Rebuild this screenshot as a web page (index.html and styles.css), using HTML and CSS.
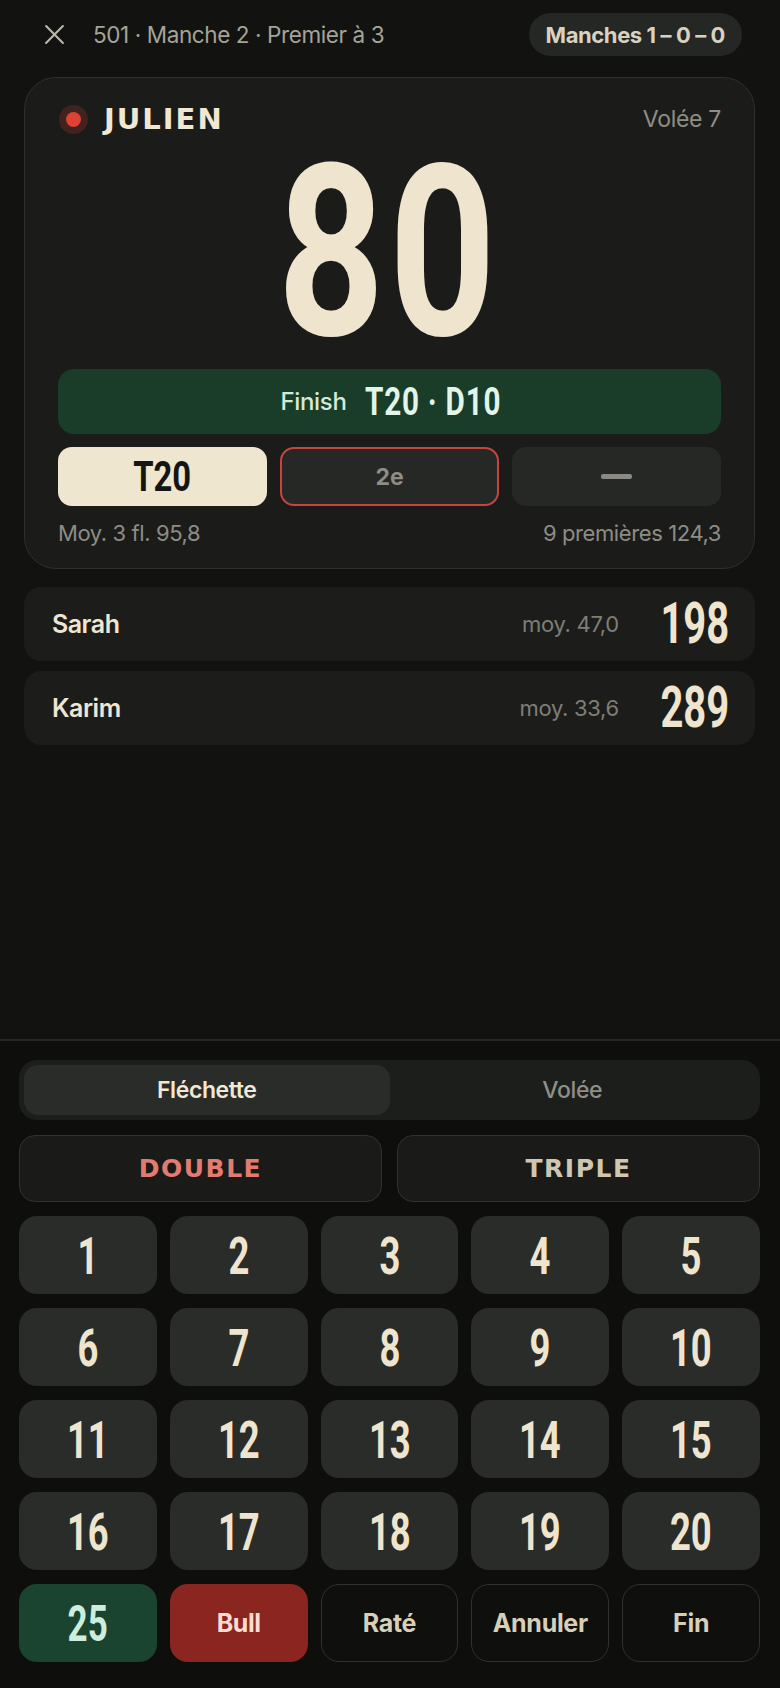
FILE: index.html
```html
<!DOCTYPE html>
<html lang="fr">
<head>
    <meta charset="UTF-8">
    <meta name="viewport" content="width=device-width, initial-scale=1.0">
    <title>501 - Manche 2</title>
    <link rel="stylesheet" href="styles.css">
</head>
<body>
    <div class="screen">
        <header class="topbar">
            <div class="topbar-left">
                <svg class="close-icon" viewBox="0 0 20 20"><path d="M2 2L18 18M18 2L2 18"/></svg>
                <span class="match-info">501 · Manche 2 · Premier à 3</span>
            </div>
            <div class="sets-pill">Manches 1 – 0 – 0</div>
        </header>

        <section class="current-card">
            <div class="card-head">
                <div class="player">
                    <span class="live-dot"></span>
                    <span class="player-name">JULIEN</span>
                </div>
                <span class="visit">Volée 7</span>
            </div>
            <div class="big-score"><span class="cond">80</span></div>
            <div class="finish">
                <span>Finish</span>
                <span class="route-box"><span class="cond finish-route">T20 · D10</span></span>
            </div>
            <div class="darts">
                <div class="dart dart-done"><span class="cond">T20</span></div>
                <div class="dart dart-next">2e</div>
                <div class="dart dart-empty"><span class="dash"></span></div>
            </div>
            <div class="stats">
                <span>Moy. 3 fl. 95,8</span>
                <span>9 premières 124,3</span>
            </div>
        </section>

        <div class="others">
            <div class="other-row">
                <span class="other-name">Sarah</span>
                <span class="other-avg">moy. 47,0</span>
                <span class="other-score cond">198</span>
            </div>
            <div class="other-row">
                <span class="other-name">Karim</span>
                <span class="other-avg">moy. 33,6</span>
                <span class="other-score cond">289</span>
            </div>
        </div>

        <section class="pad">
            <div class="segmented">
                <div class="segment active">Fléchette</div>
                <div class="segment">Volée</div>
            </div>
            <div class="modifiers">
                <button class="mod mod-double">DOUBLE</button>
                <button class="mod mod-triple">TRIPLE</button>
            </div>
            <div class="keys">
                <button class="key"><span class="cond">1</span></button>
                <button class="key"><span class="cond">2</span></button>
                <button class="key"><span class="cond">3</span></button>
                <button class="key"><span class="cond">4</span></button>
                <button class="key"><span class="cond">5</span></button>
                <button class="key"><span class="cond">6</span></button>
                <button class="key"><span class="cond">7</span></button>
                <button class="key"><span class="cond">8</span></button>
                <button class="key"><span class="cond">9</span></button>
                <button class="key"><span class="cond">10</span></button>
                <button class="key"><span class="cond">11</span></button>
                <button class="key"><span class="cond">12</span></button>
                <button class="key"><span class="cond">13</span></button>
                <button class="key"><span class="cond">14</span></button>
                <button class="key"><span class="cond">15</span></button>
                <button class="key"><span class="cond">16</span></button>
                <button class="key"><span class="cond">17</span></button>
                <button class="key"><span class="cond">18</span></button>
                <button class="key"><span class="cond">19</span></button>
                <button class="key"><span class="cond">20</span></button>
                <button class="key key-outer"><span class="cond">25</span></button>
                <button class="key key-bull">Bull</button>
                <button class="key key-action">Raté</button>
                <button class="key key-action">Annuler</button>
                <button class="key key-action">Fin</button>
            </div>
        </section>
    </div>
</body>
</html>
```

FILE: styles.css
```css
body {
    margin: 0;
    background: #121311;
    color: #efe6d2;
    font-family: Inter, "Noto Sans", sans-serif;
}

button {
    font-family: inherit;
    border: none;
    cursor: pointer;
}

.screen {
    display: flex;
    flex-direction: column;
    min-height: 1688px;
}

/* condensed display digits */
.cond {
    display: inline-block;
    font-family: Roboto, "Liberation Sans", sans-serif;
    font-weight: 700;
    transform: scaleX(0.7);
}

.topbar {
    display: flex;
    justify-content: space-between;
    align-items: center;
    padding: 13px 38px 0 44px;
    height: 43px;
}

.topbar-left {
    display: flex;
    align-items: center;
    gap: 28px;
}

.close-icon {
    width: 21px;
    height: 21px;
    fill: none;
    stroke: #bab6aa;
    stroke-width: 2;
    stroke-linecap: round;
}

.match-info {
    font-size: 22.5px;
    color: #a6a398;
    letter-spacing: -0.4px;
}

.sets-pill {
    height: 43px;
    padding: 0 17px;
    display: flex;
    align-items: center;
    background: #252724;
    border-radius: 22px;
    font-size: 22px;
    font-weight: 700;
    color: #d9d2c0;
    letter-spacing: -0.4px;
}

.current-card {
    margin: 21px 25px 0 24px;
    padding: 26px 33px 22px;
    background: #1b1c1a;
    border: 1px solid #2e302c;
    border-radius: 32px;
}

.card-head {
    display: flex;
    justify-content: space-between;
    align-items: center;
    height: 30px;
}

.player {
    display: flex;
    align-items: center;
    gap: 23px;
}

.live-dot {
    width: 15px;
    height: 15px;
    margin-left: 8px;
    border-radius: 50%;
    background: #dd4232;
    box-shadow: 0 0 0 7px rgba(200, 60, 45, 0.22);
}

.player-name {
    font-family: "DejaVu Sans", sans-serif;
    font-size: 29px;
    font-weight: 700;
    letter-spacing: 2px;
    color: #f1e8d4;
}

.visit {
    font-size: 23px;
    color: #8f8d86;
    letter-spacing: -0.3px;
}

.big-score {
    margin-top: 19px;
    text-align: center;
    font-size: 239px;
    line-height: 190px;
    color: #efe5cf;
}

.big-score .cond {
    transform: scaleX(0.78);
    letter-spacing: 6px;
}

.finish {
    margin-top: 21px;
    height: 65px;
    display: flex;
    justify-content: center;
    align-items: center;
    gap: 18px;
    background: #1a3d2a;
    border-radius: 16px;
    font-size: 24px;
    font-weight: 500;
    color: #d3ead9;
    letter-spacing: -0.3px;
}

.route-box {
    width: 134px;
    display: flex;
}

.finish-route {
    flex: none;
    white-space: nowrap;
    font-size: 39px;
    color: #e2f5e8;
    letter-spacing: 1px;
    transform: scaleX(0.76);
    transform-origin: left center;
}

.darts {
    margin-top: 13px;
    display: grid;
    grid-template-columns: 194fr 203fr 194fr;
    gap: 13px;
}

.dart {
    height: 59px;
    box-sizing: border-box;
    display: flex;
    justify-content: center;
    align-items: center;
    border-radius: 14px;
    background: #262825;
}

.dart-done {
    background: #efe6cf;
    color: #151614;
    font-size: 42px;
}

.dart-done .cond {
    transform: scaleX(0.78);
}

.dart-next {
    border: 2.5px solid #c9443a;
    font-size: 23px;
    font-weight: 700;
    color: #8d8c85;
}

.dash {
    width: 31px;
    height: 5px;
    border-radius: 2px;
    background: #8a8983;
}

.stats {
    margin-top: 14px;
    display: flex;
    justify-content: space-between;
    font-size: 22px;
    line-height: 26px;
    color: #8d8c85;
    letter-spacing: -0.4px;
}

.others {
    margin: 18px 25px 0 24px;
    display: flex;
    flex-direction: column;
    gap: 10px;
}

.other-row {
    height: 74px;
    display: flex;
    align-items: center;
    padding: 0 26px 0 28px;
    background: #1c1d1b;
    border-radius: 18px;
}

.other-name {
    flex: 1;
    font-size: 25px;
    font-weight: 600;
    color: #efe6d2;
    letter-spacing: -0.5px;
}

.other-avg {
    margin-right: 12px;
    font-size: 22px;
    color: #7f7e78;
    letter-spacing: -0.3px;
}

.other-score {
    font-size: 57px;
    line-height: 60px;
    color: #efe5cf;
    transform-origin: right center;
}

.pad {
    margin-top: auto;
    padding: 19px 20px 26px 19px;
    background: #0e0f0d;
    border-top: 2px solid #272826;
}

.segmented {
    height: 60px;
    box-sizing: border-box;
    padding: 5px;
    display: grid;
    grid-template-columns: 1fr 1fr;
    background: #1c1e1b;
    border-radius: 18px;
}

.segment {
    display: flex;
    justify-content: center;
    align-items: center;
    font-size: 23px;
    font-weight: 500;
    color: #8f8e87;
    border-radius: 14px;
    letter-spacing: -0.4px;
}

.segment.active {
    background: #2a2c29;
    color: #f1e8d4;
    font-weight: 600;
}

.modifiers {
    margin-top: 15px;
    display: grid;
    grid-template-columns: 1fr 1fr;
    gap: 15px;
}

.mod {
    height: 67px;
    background: #1a1b19;
    border: 1px solid #30322e;
    border-radius: 16px;
    font-family: "DejaVu Sans", sans-serif;
    font-size: 25px;
    font-weight: 700;
    letter-spacing: 1.5px;
}

.mod-double {
    color: #e27c70;
}

.mod-triple {
    color: #cfc7b2;
}

.keys {
    margin-top: 14px;
    display: grid;
    grid-template-columns: repeat(5, 1fr);
    grid-auto-rows: 78px;
    gap: 14px 13px;
}

.key {
    border-radius: 18px;
    background: #2a2c29;
    color: #efe5cf;
    font-size: 52px;
    padding: 0;
}

.key-outer {
    background: #1a4330;
    color: #cdeedc;
    font-size: 50px;
}

.key-bull {
    background: #8a261f;
    color: #fadcd5;
    font-size: 25px;
    font-weight: 700;
    letter-spacing: -0.4px;
}

.key-action {
    background: #0f100e;
    border: 1px solid #30322e;
    color: #d8cfb8;
    font-size: 25px;
    font-weight: 700;
    letter-spacing: -0.3px;
}
```
